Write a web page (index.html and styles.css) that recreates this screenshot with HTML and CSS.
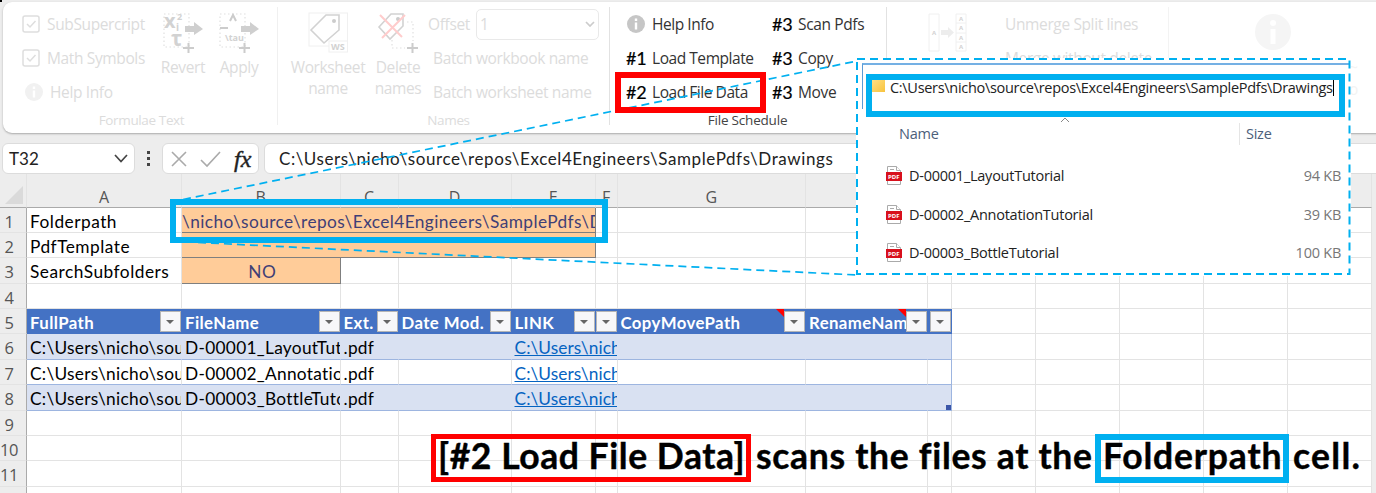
FILE: index.html
```html
<!DOCTYPE html>
<html lang="en">
<head>
<meta charset="utf-8">
<title>File Schedule</title>
<link rel="stylesheet" href="styles.css">
</head>
<body>
<div class="app">
  <div class="corner"></div>
  <div class="ribbon">
    <section class="group g-formulae faded">
      <div class="body">
        <div class="stack">
          <div class="item"><svg class="check" viewBox="0 0 18 18"><rect x="1" y="1" width="16" height="16" rx="2"/><path d="M5 9l3 3 5.500-6"/></svg><span>SubSupercript</span></div>
          <div class="item"><svg class="check" viewBox="0 0 18 18"><rect x="1" y="1" width="16" height="16" rx="2"/><path d="M5 9l3 3 5.500-6"/></svg><span>Math Symbols</span></div>
          <div class="item indent"><svg class="info pale" viewBox="0 0 18 18"><circle cx="9" cy="9" r="9"/><path d="M7.800 7.500h2.400v7H7.800zM7.800 3.500h2.400v2.500H7.800z"/></svg><span>Help Info</span></div>
        </div>
        <div class="big revert">
          <svg width="40" height="42" viewBox="0 0 40 42">
            <rect class="dots" x="1" y="2" width="25" height="33"/>
            <text class="glyph" x="1" y="16" font-size="20">x</text><text class="glyph" x="14" y="8" font-size="9">2</text><text class="glyph" x="13" y="19" font-size="10">i</text>
            <text class="glyph" x="8" y="34" font-size="21">τ</text>
            <path class="arrow" d="M22 14h9v-4l9 7-9 6v-3h-9z"/><path class="plus" d="M20 36h11M25.500 31v10"/>
          </svg>
          <span>Revert</span>
        </div>
        <div class="big apply">
          <svg width="40" height="42" viewBox="0 0 40 42">
            <rect class="dots" x="1" y="2" width="25" height="33"/>
            <path class="plus" d="M1 16h8M11 9l3-6 3 6"/><text class="glyph" x="6" y="29" font-size="9">\tau</text>
            <path class="arrow" d="M22 14h9v-4l9 7-9 6v-3h-9z"/><path class="plus" d="M20 36h11M25.500 31v10"/>
          </svg>
          <span>Apply</span>
        </div>
      </div>
      <div class="label">Formulae Text</div>
    </section>
    <section class="group g-names faded">
      <div class="body">
        <div class="big ws">
          <svg width="40" height="42" viewBox="0 0 40 42">
            <rect class="frame" x="1" y="1" width="38.500" height="33"/><path class="tag" d="M3 18L18 3h13v15L16 31z"/><circle cx="26" cy="9" r="2" fill="#ccc"/>
            <rect class="frame solid" x="21" y="29" width="18.500" height="11"/><text class="glyph" x="23" y="38" font-size="9">WS</text>
          </svg>
          <span>Worksheet<br>name</span>
        </div>
        <div class="big del">
          <svg width="40" height="42" viewBox="0 0 40 42">
            <path class="dots" d="M14 28v8h13M29 10h6v19"/><path class="tag" d="M1 15L13 2h12v12L12 27z"/><circle cx="20" cy="7" r="2" fill="#ccc"/>
            <path class="cross" d="M2 3l22 22M27 3L4 26"/><path class="plus" d="M29 36h11M34.500 31v10"/>
          </svg>
          <span>Delete<br>names</span>
        </div>
        <div class="stack names-stack">
          <div class="item offset"><span>Offset</span><div class="select"><span>1</span><svg width="10" height="6" viewBox="0 0 10 6"><path d="M1 1l4 4 4-4"/></svg></div></div>
          <div class="item"><span>Batch workbook name</span></div>
          <div class="item"><span>Batch worksheet name</span></div>
        </div>
      </div>
      <div class="label">Names</div>
    </section>
    <section class="group g-file">
      <div class="body">
        <div class="stack col-a">
          <div class="item"><svg class="info" viewBox="0 0 18 18"><circle cx="9" cy="9" r="9"/><path d="M7.800 7.500h2.400v7H7.800zM7.800 3.500h2.400v2.500H7.800z"/></svg><span>Help Info</span></div>
          <div class="item"><b>#1</b><span>Load Template</span></div>
          <div class="item"><b>#2</b><span>Load File Data</span></div>
        </div>
        <div class="stack col-b">
          <div class="item"><b>#3</b><span>Scan Pdfs</span></div>
          <div class="item"><b>#3</b><span>Copy</span></div>
          <div class="item"><b>#3</b><span>Move</span></div>
        </div>
      </div>
      <div class="label">File Schedule</div>
    </section>
    <section class="group g-merge faded">
      <div class="body">
        <svg class="split" width="40" height="40" viewBox="0 0 40 40">
          <path class="frame" d="M1 1h10v37H1zM28 1h10v37H28zM28 10h10M28 20h10M28 29h10"/><path class="arrow pale-fill" d="M13 17h7v-3l6 5.500-6 5.500v-3h-7z"/>
          <g class="glyph" font-size="6"><text x="4" y="22">A</text><text x="31" y="8">A</text><text x="31" y="17">A</text><text x="31" y="27">A</text><text x="31" y="36">A</text></g>
        </svg>
        <div class="stack">
          <div class="item"><span>Unmerge Split lines</span></div>
          <div class="item"><span>Merge without delete</span></div>
        </div>
      </div>
    </section>
    <section class="group g-info faded">
      <svg width="38" height="38" viewBox="0 0 38 38"><circle cx="19" cy="19" r="18" fill="#f5f5f5"/><circle cx="19" cy="10" r="3" fill="#fff"/><path d="M16.500 16h5v15h-5z" fill="#fff"/></svg>
      <div class="tail"><span>~</span><span>o</span></div>
    </section>
  </div>

  <div class="formula-bar">
    <div class="box name-box"><span>T32</span><svg width="14" height="9" viewBox="0 0 14 9"><path d="M1 1l6 6.500L13 1"/></svg></div>
    <div class="grip"><i></i><i></i><i></i></div>
    <div class="box fx"><svg width="52" height="18" viewBox="0 0 52 18"><path d="M2 2l14 14M16 2L2 16M31 10l6 6L50 2"/></svg><em>fx</em></div>
    <div class="box formula"><span>C:\Users\nicho\source\repos\Excel4Engineers\SamplePdfs\Drawings</span></div>
  </div>

  <div class="sheet">
    <div class="row head"><div class="all"></div><div>A</div><div>B</div><div>C</div><div>D</div><div>E</div><div>F</div><div>G</div><div></div><div></div><div></div><div></div><div></div><div></div><div></div></div>
    <div class="row"><div class="n">1</div><div>Folderpath</div><div class="input wide"><span class="path">\nicho\source\repos\Excel4Engineers\SamplePdfs\D</span></div><div></div><div></div><div></div><div></div><div></div><div></div><div></div><div></div><div></div></div>
    <div class="row"><div class="n">2</div><div>PdfTemplate</div><div class="input wide"></div><div></div><div></div><div></div><div></div><div></div><div></div><div></div><div></div><div></div></div>
    <div class="row"><div class="n">3</div><div>SearchSubfolders</div><div class="input no">NO</div><div></div><div></div><div></div><div></div><div></div><div></div><div></div><div></div><div></div><div></div><div></div><div></div></div>
    <div class="row"><div class="n">4</div><div></div><div></div><div></div><div></div><div></div><div></div><div></div><div></div><div></div><div></div><div></div><div></div><div></div><div></div></div>
    <div class="row th"><div class="n">5</div><div>FullPath<u></u></div><div>FileName<u></u></div><div>Ext.<u></u></div><div>Date Mod.<u></u></div><div>LINK<u></u></div><div><u></u></div><div class="note">CopyMovePath<u></u></div><div class="note">RenameNam<u></u></div><div><u></u></div><div></div><div></div><div></div><div></div><div></div></div>
    <div class="row td band"><div class="n">6</div><div>C:\Users\nicho\sou</div><div>D-00001_LayoutTut</div><div>.pdf</div><div></div><div class="link"><a>C:\Users\nich</a></div><div></div><div></div><div class="last"></div><div></div><div></div><div></div><div></div><div></div></div>
    <div class="row td"><div class="n">7</div><div>C:\Users\nicho\sou</div><div>D-00002_Annotatio</div><div>.pdf</div><div></div><div class="link"><a>C:\Users\nich</a></div><div></div><div></div><div class="last"></div><div></div><div></div><div></div><div></div><div></div></div>
    <div class="row td band"><div class="n">8</div><div>C:\Users\nicho\sou</div><div>D-00003_BottleTuto</div><div>.pdf</div><div></div><div class="link"><a>C:\Users\nich</a></div><div></div><div></div><div class="last handle"></div><div></div><div></div><div></div><div></div><div></div></div>
    <div class="row"><div class="n">9</div><div></div><div></div><div></div><div></div><div></div><div></div><div></div><div></div><div></div><div></div><div></div><div></div><div></div><div></div></div>
    <div class="row"><div class="n">10</div><div></div><div></div><div></div><div></div><div></div><div></div><div></div><div></div><div></div><div></div><div></div><div></div><div></div><div></div></div>
    <div class="row"><div class="n">11</div><div></div><div></div><div></div><div></div><div></div><div></div><div></div><div></div><div></div><div></div><div></div><div></div><div></div><div></div></div>
    <div class="row"><div class="n"></div><div></div><div></div><div></div><div></div><div></div><div></div><div></div><div></div><div></div><div></div><div></div><div></div><div></div><div></div></div>
  </div>

  <div class="mark cell-mark"></div>
  <svg class="lines" width="1376" height="493" viewBox="0 0 1376 493"><path d="M183 199.500L857 61M172 241.200L857 275"/></svg>
  <div class="mark load-mark"></div>

  <div class="explorer">
    <div class="address"><i class="folder"></i><span>C:\Users\nicho\source\repos\Excel4Engineers\SamplePdfs\Drawings</span><i class="caret"></i></div>
    <svg class="sort" width="10" height="6" viewBox="0 0 10 6"><path d="M1 5l4-4 4 4"/></svg>
    <div class="cols"><span>Name</span><span>Size</span></div>
    <div class="file"><svg class="pdf" viewBox="0 0 16 19"><path class="page" d="M1.500.5h9l4 4v14h-13z"/><path class="page" d="M10.500.5v4h4M4 3.500h4"/><rect y="6" width="16" height="9" fill="#d8101c"/><text x="2" y="13">PDF</text></svg><span>D-00001_LayoutTutorial</span><em>94 KB</em></div>
    <div class="file"><svg class="pdf" viewBox="0 0 16 19"><path class="page" d="M1.500.5h9l4 4v14h-13z"/><path class="page" d="M10.500.5v4h4M4 3.500h4"/><rect y="6" width="16" height="9" fill="#d8101c"/><text x="2" y="13">PDF</text></svg><span>D-00002_AnnotationTutorial</span><em>39 KB</em></div>
    <div class="file"><svg class="pdf" viewBox="0 0 16 19"><path class="page" d="M1.500.5h9l4 4v14h-13z"/><path class="page" d="M10.500.5v4h4M4 3.500h4"/><rect y="6" width="16" height="9" fill="#d8101c"/><text x="2" y="13">PDF</text></svg><span>D-00003_BottleTutorial</span><em>100 KB</em></div>
    <svg class="dash" width="496" height="218" viewBox="0 0 496 218"><path d="M1 1H493.500V216H1z"/></svg>
  </div>

  <div class="caption"><span class="c-red">[#2 Load File Data]</span><span class="c-mid">scans the files at the</span><span class="c-blue">Folderpath</span><span class="c-end">cell.</span></div>
</div>
</body>
</html>
```
FILE: styles.css
```css
* { box-sizing: border-box; }
body { margin: 0; }
.app { position: relative; width: 1376px; height: 493px; overflow: hidden; background: #ededed; font-family: "Open Sans", "Noto Sans", sans-serif; display: flex; flex-direction: column; white-space: nowrap; }
.corner { position: absolute; left: 0; top: 0; width: 2px; height: 2px; background: #000; }
svg { flex: none; display: block; }

/* ribbon */
.ribbon { flex: none; display: flex; width: 1390px; height: 131px; margin: 2px 0 0 3px; padding-top: 5px; background: #fff; border-radius: 9px; box-shadow: 0 1px 2px #aaa; font-size: 15.5px; letter-spacing: -.37px; color: #333; }
.group { position: relative; height: 118px; display: flex; flex-direction: column; border-right: 1px solid #e2e2e2; flex: none; }
.faded { color: #dcdcdc; }
.g-formulae { border-color: #f0f0f0; }
.body { display: flex; height: 102px; }
.stack { display: flex; flex-direction: column; }
.item { display: flex; align-items: center; height: 34px; }
.label { line-height: 22px; font-size: 13.5px; text-align: center; }
.g-formulae { width: 275px; padding-left: 19px; }
.g-formulae .label { padding-right: 16px; }
.g-formulae .stack { width: 137px; flex: none; }
.check { width: 18px; height: 18px; margin-right: 7px; fill: none; stroke: #dedede; stroke-width: 1.5; }
.info { width: 18px; height: 18px; margin-right: 7px; fill: #c6c6c6; }
.info path { fill: #fff; }
.pale { fill: #f1f1f1; }
.indent { padding-left: 3px; }
.big { display: flex; flex-direction: column; align-items: center; text-align: center; line-height: 21px; padding-top: 5px; flex: none; }
.big svg { margin-bottom: 3px; overflow: visible; }
.revert { width: 48px; }
.apply { width: 56px; margin-left: 4px; }
.glyph { font-family: "Open Sans", sans-serif; font-weight: 700; fill: #d2d2d2; letter-spacing: 0; }
.dots { fill: none; stroke: #e0e0e0; stroke-width: 1.2; stroke-dasharray: 1.5 2.5; }
.arrow { fill: #cfcfcf; }
.arrow.pale-fill { fill: #ededed; }
.plus { fill: none; stroke: #ccc; stroke-width: 2; }
.tag { fill: none; stroke: #d2d2d2; stroke-width: 1.6; }
.frame { fill: none; stroke: #f0f0f0; }
.solid { fill: #fff; }
.cross { stroke: #fcc; stroke-width: 2; }
.g-names { width: 332px; padding-left: 10px; }
.ws { width: 80px; }
.del { width: 60px; }
.names-stack .item { padding-left: 5px; }
.names-stack .offset { padding-left: 0; justify-content: space-between; width: 171px; }
.select { display: flex; align-items: center; justify-content: space-between; width: 123px; height: 31px; border: 1px solid #e9e9e9; border-radius: 5px; padding: 0 3px; }
.select svg { fill: none; stroke: #ccc; stroke-width: 1.7; }
.g-file { width: 277px; padding-left: 16px; }
.g-file .col-a { width: 146px; letter-spacing: -.45px; }
.g-file b { width: 26px; font: 400 18px Lato, sans-serif; color: #000; letter-spacing: -.3px; -webkit-text-stroke: .2px #000; }
.g-file .info { margin: 0 7px 0 1px; }
.g-file .label { padding-right: 17px; color: #444; letter-spacing: -.2px; }
.g-merge { width: 282px; padding-left: 41px; border-color: #f3f3f3; }
.split { margin: 6px 37px 0 0; }
.g-info { flex-direction: row; padding: 6px 0 0 85px; border: 0; color: #f3f3f3; }
.tail { display: flex; flex-direction: column; width: 20px; margin-left: 57px; padding-top: 43px; line-height: 22px; }

/* formula bar */
.formula-bar { flex: none; display: flex; height: 31px; margin: 10px 0 0 2px; width: 1390px; font-size: 17px; color: #222; }
.box { display: flex; align-items: center; background: #fff; border: 1px solid #dcdcdc; border-radius: 6px; }
.name-box { width: 133px; padding: 0 6px; justify-content: space-between; }
.name-box span, .formula span { font-family: Lato, sans-serif; letter-spacing: .59px; }
.name-box span { letter-spacing: 0; }
.name-box svg { fill: none; stroke: #444; stroke-width: 1.7; }
.grip { display: flex; flex-direction: column; width: 27px; align-items: center; justify-content: center; gap: 3px; }
.grip i { width: 3px; height: 3px; background: #444; }
.fx { width: 97px; padding-left: 7px; }
.fx svg { fill: none; stroke: #aaa; stroke-width: 1.6; }
.fx em { font: italic 24px "Liberation Serif", serif; margin-left: 12px; line-height: 24px; color: #222; -webkit-text-stroke: .4px #222; }
.formula { flex: 1; margin-left: 5px; padding-left: 14px; }

/* sheet */
.sheet { flex: none; font-family: Lato, sans-serif; font-size: 17.3px; letter-spacing: .5px; color: #000; }
.row { display: grid; grid-template-columns: 27px 155px 158.5px 58px 113px 84.5px 21.5px 188.5px 121.5px 24.500px 84px 84px 84px 84px 84px; height: 25.4px; width: 1376px; line-height: 28px; overflow: hidden; }
.row > div { background: #fff; border-right: 1px solid #e3e3e3; border-bottom: 1px solid #e3e3e3; padding-left: 3px; overflow: hidden; position: relative; }
.row.head { height: 33.5px; font: 16px/46px "Open Sans", sans-serif; letter-spacing: 0; }
.row.head > div { background: #ededed; border-bottom-color: #aaa; text-align: center; color: #555; padding: 0; }
.row .n { background: #ededed; color: #555; font: 16.5px/27.5px "Open Sans", sans-serif; letter-spacing: -.5px; padding: 0; text-align: center; border-right-color: #aaa; padding-right: 8px; }
.row.head .all::after { content: ""; position: absolute; right: 3px; bottom: 3px; border-left: 18px solid transparent; border-bottom: 18px solid #dadada; }
.row .input { background: #ffcc99; color: #3f3f76; border-color: #7f7f7f; }
.row .wide { grid-column: span 4; padding-left: 0; }
.path { letter-spacing: .4px; }
.row .no { text-align: center; }
.row.th > div:nth-child(n+2):nth-child(-n+10) { background: #4472c4; color: #fff; font-weight: 700; border-color: #4472c4; font-size: 16.8px; letter-spacing: .4px; }
.th u { position: absolute; right: 0; top: 2px; width: 21px; height: 21px; background: #f7f7f9; border: 1px solid #b5b5b5; }
.th u::after { content: ""; position: absolute; left: 5px; top: 8px; border: 4.500px solid transparent; border-top-color: #666; border-bottom: 0; }
.note::after { content: ""; position: absolute; right: 21px; top: 0; border-left: 8px solid transparent; border-top: 8px solid #f00; }
.row.td { letter-spacing: .3px; }
.row.td > div:nth-child(n+2):nth-child(-n+9) { border-bottom-color: #9db5e0; }
.row.band > div:nth-child(n+2):nth-child(-n+9) { background: #d9e1f2; border-right-color: #d9e1f2; }
.row.td > .link { grid-column: span 2; letter-spacing: .1px; }
.link a { color: #0563c1; text-decoration: underline; }
.row.td > div.last.last { border-right: 1px solid #9db5e0; }
.handle::after { content: ""; position: absolute; right: 0; bottom: 0; width: 5px; height: 5px; background: #3b55a8; }

/* annotations */
.mark { position: absolute; border: 6px solid #00b0f0; }
.cell-mark { left: 170px; top: 199px; width: 438px; height: 44px; }
.load-mark { left: 615px; top: 72px; width: 151px; height: 41px; border-color: #f00; }
.lines { position: absolute; left: 0; top: 0; fill: none; stroke: #00b0f0; stroke-width: 1.7; stroke-dasharray: 8 5; }

.explorer { position: absolute; left: 856px; top: 58px; width: 495px; height: 218px; background: #fff; padding-top: 5px; color: #222; font-size: 14.5px; letter-spacing: -.25px; }
.explorer::before { content: ""; position: absolute; left: 6px; right: 1px; top: 5px; height: 44px; border-left: 1px solid #5b9bd5; border-top: 2px solid #74b0e4; }
.address { position: relative; display: flex; width: 479px; height: 43px; margin: 11px 0 0 10px; border: 6px solid #00b0f0; line-height: 15px; letter-spacing: -.3px; }
.folder { width: 13px; height: 12px; margin: 0 5px 0 0; background: linear-gradient(135deg, #ffdf85, #f8c33c); }
.caret { width: 1px; height: 16px; background: #000; }
.sort { margin: 0 0 0 204px; fill: none; stroke: #888; }
.cols { display: flex; height: 22px; padding-left: 43px; line-height: 22px; color: #4c607a; }
.cols span:first-child { width: 340px; }
.cols span + span { border-left: 1px solid #e5e5e5; padding-left: 6px; }
.file { display: flex; align-items: center; height: 38.700px; padding: 0 10px 0 30px; }
.cols + .file { margin-top: 11px; }
.file em { margin-left: auto; font-style: normal; color: #777; }
.pdf { width: 16px; height: 19px; margin-right: 7px; }
.page { fill: #fff; stroke: #aaa; }
.pdf text { font: 700 6px "Open Sans", sans-serif; fill: #fff; letter-spacing: 0; }
.dash { position: absolute; left: 0; top: 0; fill: none; stroke: #00b0f0; stroke-width: 2; stroke-dasharray: 8 5; }

.caption { position: absolute; left: 431px; top: 434px; display: flex; font: 700 35.5px/34px Lato, sans-serif; letter-spacing: .55px; color: #000; -webkit-text-stroke: .4px #000; }
.c-red { width: 320px; height: 48px; border: 5px solid #f00; padding-left: 2px; }
.c-mid { width: 344px; padding: 5px 0 0 5px; letter-spacing: .7px; }
.c-blue { width: 194px; height: 49px; border: 6px solid #00b0f0; padding-left: 2px; line-height: 32px; letter-spacing: .8px; }
.c-end { padding: 5px 0 0 4px; letter-spacing: 1.3px; }
```
